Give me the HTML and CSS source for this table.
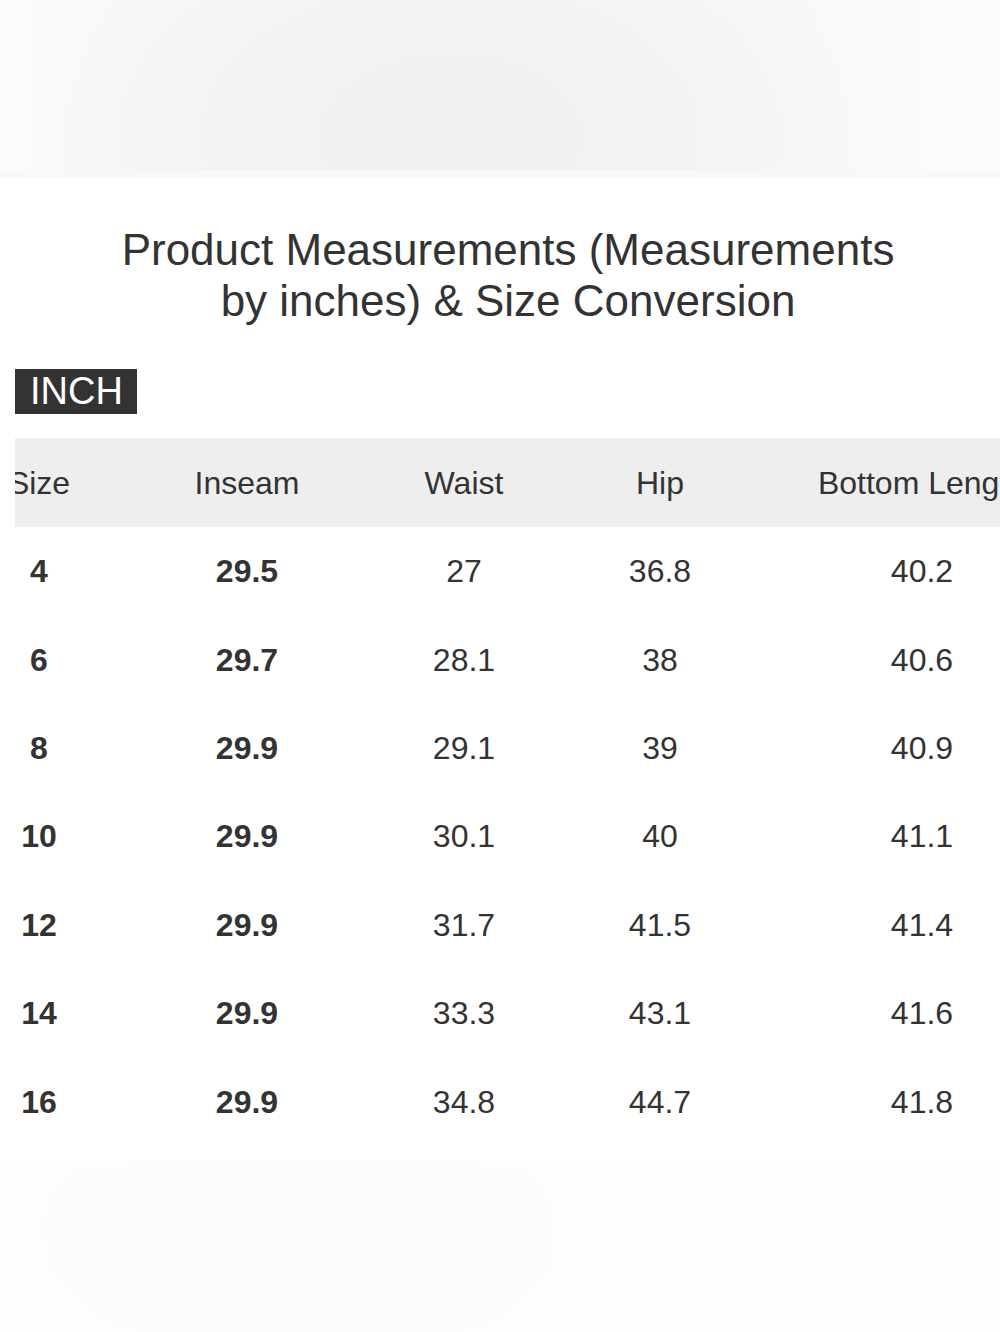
FILE: index.html
```html
<!DOCTYPE html>
<html lang="en">
<head>
<meta charset="utf-8">
<title>Product Measurements</title>
<link rel="stylesheet" href="styles.css">
</head>
<body>
<div class="top-band"></div>
<div class="top-strip"></div>
<main class="card">
  <h1 class="title">Product Measurements (Measurements<br>by inches) &amp; Size Conversion</h1>
  <div class="unit-row"><span class="unit">INCH</span></div>
  <div class="table-wrap">
    <table class="size-table">
      <colgroup>
        <col class="c1"><col class="c2"><col class="c3"><col class="c4"><col class="c5">
      </colgroup>
      <thead>
        <tr><th>Size</th><th>Inseam</th><th>Waist</th><th>Hip</th><th>Bottom Length</th></tr>
      </thead>
      <tbody>
        <tr><td class="b">4</td><td class="b">29.5</td><td>27</td><td>36.8</td><td>40.2</td></tr>
        <tr><td class="b">6</td><td class="b">29.7</td><td>28.1</td><td>38</td><td>40.6</td></tr>
        <tr><td class="b">8</td><td class="b">29.9</td><td>29.1</td><td>39</td><td>40.9</td></tr>
        <tr><td class="b">10</td><td class="b">29.9</td><td>30.1</td><td>40</td><td>41.1</td></tr>
        <tr><td class="b">12</td><td class="b">29.9</td><td>31.7</td><td>41.5</td><td>41.4</td></tr>
        <tr><td class="b">14</td><td class="b">29.9</td><td>33.3</td><td>43.1</td><td>41.6</td></tr>
        <tr><td class="b">16</td><td class="b">29.9</td><td>34.8</td><td>44.7</td><td>41.8</td></tr>
      </tbody>
    </table>
  </div>
</main>
<div class="bottom-band"></div>
</body>
</html>
```
FILE: styles.css
```css
html, body {
  margin: 0;
  padding: 0;
  background: #ffffff;
  font-family: "Liberation Sans", Arial, Helvetica, sans-serif;
  color: #333333;
  overflow: hidden;
}

.top-band {
  height: 170px;
  background:
    radial-gradient(ellipse 420px 260px at 45% 80%, #f0f0f0 0%, #f2f2f2 45%, #f6f6f6 80%, rgba(246,246,246,0) 100%),
    linear-gradient(to right, #fbfbfb 0%, #f6f6f6 25%, #f5f5f5 50%, #f7f7f7 75%, #fcfcfc 100%);
}

.top-strip {
  height: 8px;
  background: #f8f8f8;
}

.card {
  background: #ffffff;
  padding: 46px 0 15px;
}

.title {
  margin: 0;
  padding-left: 16px;
  font-size: 44px;
  line-height: 51px;
  font-weight: 400;
  text-align: center;
  color: #333333;
}

.unit-row {
  display: flex;
  padding: 43px 15px 0;
}

.unit {
  display: block;
  background: #333333;
  color: #ffffff;
  font-size: 38px;
  line-height: 45px;
  height: 45px;
  padding: 0 14px 0 15px;
}

.table-wrap {
  margin: 24px 0 0 15px;
  overflow: hidden;
}

.size-table {
  margin-left: -80px;
  border-collapse: collapse;
  table-layout: fixed;
  width: 1166px;
  font-size: 32px;
  color: #333333;
}

.c1 { width: 208px; }
.c2 { width: 208px; }
.c3 { width: 226px; }
.c4 { width: 166px; }
.c5 { width: 358px; }

.size-table th,
.size-table td {
  padding: 0;
  text-align: center;
  vertical-align: middle;
  white-space: nowrap;
  line-height: 36px;
}

.size-table thead tr {
  height: 89px;
  background: #eeeeee;
}

.size-table th {
  font-weight: 400;
}

.size-table tbody tr {
  height: 88.4px;
}

.size-table td.b {
  font-weight: 700;
}

.bottom-band {
  height: 180px;
  background:
    radial-gradient(ellipse 300px 160px at 30% 40%, #fbfbfb 0%, #fcfcfc 60%, rgba(252,252,252,0) 100%),
    #fdfdfd;
}
```
